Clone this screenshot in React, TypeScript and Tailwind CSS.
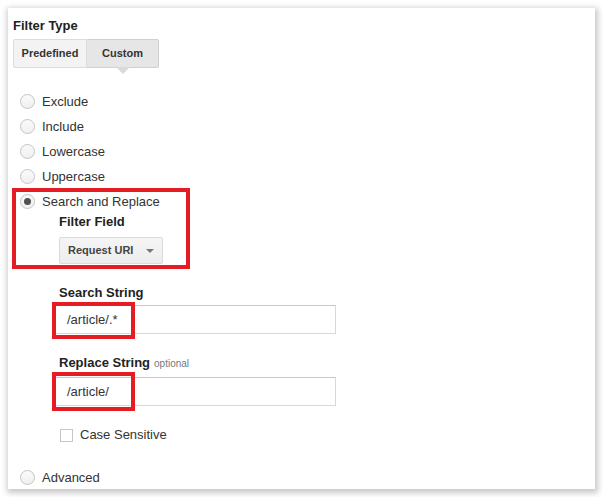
import React from 'react';

const options = ['Exclude', 'Include', 'Lowercase', 'Uppercase'];

function Radio({ checked }: { checked?: boolean }) {
  return (
    <span className="flex h-[15px] w-[15px] shrink-0 items-center justify-center rounded-full border border-[#c4c4c4] bg-gradient-to-b from-[#fafafa] to-[#f0f0f0]">
      {checked && <span className="h-[7px] w-[7px] rounded-full bg-[#505050]" />}
    </span>
  );
}

function RadioRow({ label, checked }: { label: string; checked?: boolean }) {
  return (
    <div className="flex h-[25px] items-center gap-[7px] pl-[7px]">
      <Radio checked={checked} />
      <span className="text-[13px] text-[#333]">{label}</span>
    </div>
  );
}

function TextField({ value }: { value: string }) {
  return (
    <div className="flex h-[29px] w-[281px] items-center border border-[#d9d9d9] border-t-[#c8c8c8] bg-white pl-[11px] text-[13px] text-[#333]">
      {value}
    </div>
  );
}

export default function App() {
  return (
    <div className="h-[497px] w-[603px] bg-white p-2 font-['Liberation_Sans',Arial,sans-serif]">
      <div className="relative h-[481px] w-[587px] bg-white pl-[5px] shadow-[1px_2px_6px_2px_rgba(0,0,0,0.22)]">
        <div className="pt-[10px] text-[13px] font-bold leading-[15px] text-[#222]">Filter Type</div>

        <div className="mt-[6px] flex h-[29px] w-[146px] text-[11px] font-bold text-[#333]">
          <div className="flex w-[74px] items-center justify-center rounded-l-[2px] border border-[#dcdcdc] bg-[#f3f3f3]">
            Predefined
          </div>
          <div className="relative flex w-[72px] items-center justify-center rounded-r-[2px] border border-l-0 border-[#d0d0d0] bg-[#e6e6e6]">
            Custom
            <span className="absolute left-1/2 top-full -ml-[7px] h-0 w-0 border-x-[7px] border-t-[7px] border-x-transparent border-t-[#dadada]" />
          </div>
        </div>

        <div className="mt-[21px]">
          {options.map((o) => (
            <RadioRow key={o} label={o} />
          ))}
          <RadioRow label="Search and Replace" checked />
        </div>

        <div className="pl-[46px]">
          <div className="text-[13px] font-bold leading-[15px] text-[#222]">Filter Field</div>
          <div className="mt-[8px] flex h-[27px] w-[104px] items-center justify-between rounded-[2px] border border-[#dadada] bg-gradient-to-b from-[#f5f5f5] to-[#ededed] pl-[8px] pr-[8px] text-[11px] font-bold text-[#444]">
            Request URI
            <span className="h-0 w-0 border-x-[4px] border-t-[4px] border-x-transparent border-t-[#777]" />
          </div>

          <div className="mt-[21px] text-[13px] font-bold leading-[15px] text-[#222]">Search String</div>
          <div className="-ml-[4px] mt-[5px]">
            <TextField value="/article/.*" />
          </div>
          <div className="mt-[21px] flex items-baseline gap-[4px] leading-[15px]">
            <span className="text-[13px] font-bold text-[#222]">Replace String</span>
            <span className="text-[10px] text-[#777]">optional</span>
          </div>
          <div className="-ml-[4px] mt-[6px]">
            <TextField value="/article/" />
          </div>
          <label className="mt-[21px] flex h-[16px] items-center gap-[7px] pl-[1px]">
            <span className="h-[13px] w-[13px] border border-[#c6c6c6] bg-white" />
            <span className="text-[13px] text-[#333]">Case Sensitive</span>
          </label>
        </div>

        <div className="mt-[22px]">
          <RadioRow label="Advanced" />
        </div>

        <div className="pointer-events-none absolute left-[4px] top-[180px] h-[81px] w-[178px] border-[4px] border-[#e51c23]" />
        <div className="pointer-events-none absolute left-[44px] top-[294px] h-[37px] w-[83px] border-[4px] border-[#e51c23]" />
        <div className="pointer-events-none absolute left-[44px] top-[364px] h-[39px] w-[83px] border-[4px] border-[#e51c23]" />
      </div>
    </div>
  );
}
